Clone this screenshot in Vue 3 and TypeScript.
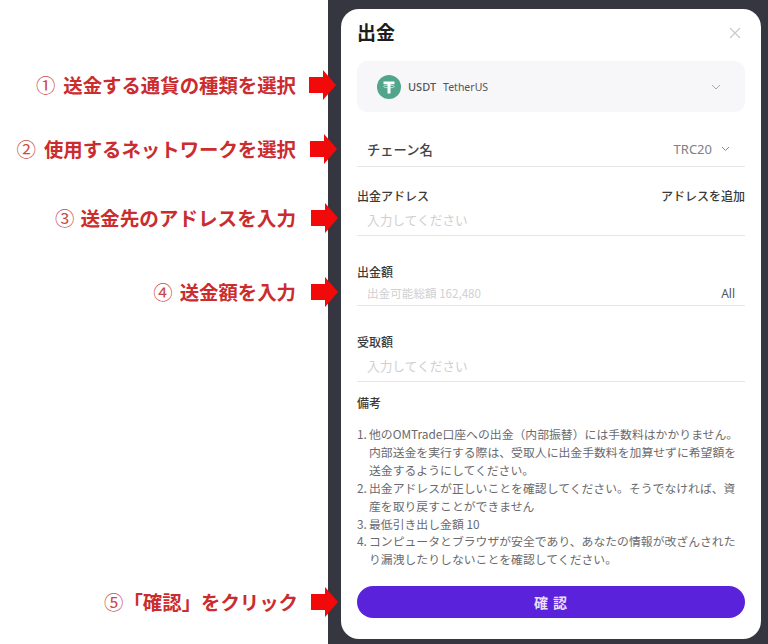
<script setup lang="ts">
const steps = [
  { id: 1, mark: '①', text: '送金する通貨の種類を選択', cls: 'a' },
  { id: 2, mark: '②', text: '使用するネットワークを選択', cls: 'b' },
  { id: 3, mark: '③', text: '送金先のアドレスを入力', cls: 'c' },
  { id: 4, mark: '④', text: '送金額を入力', cls: 'd' },
  { id: 5, mark: '⑤', text: '「確認」をクリック', cls: 'e' },
]
const notes = [
  { n: '1.', t: '他のOMTrade口座への出金（内部振替）には手数料はかかりません。内部送金を実行する際は、受取人に出金手数料を加算せずに希望額を送金するようにしてください。' },
  { n: '2.', t: '出金アドレスが正しいことを確認してください。そうでなければ、資産を取り戻すことができません' },
  { n: '3.', t: '最低引き出し金額 10' },
  { n: '4.', t: 'コンピュータとブラウザが安全であり、あなたの情報が改ざんされたり漏洩したりしないことを確認してください。' },
]
</script>

<template>
  <div class="page">
    <div class="steps">
      <div v-for="s in steps" :key="s.id" class="step" :class="s.cls">
        <span class="step-mark">{{ s.mark }}</span>
        <span class="step-text">{{ s.text }}</span>
        <svg class="arrow" width="27" height="30" viewBox="0 0 27 30">
          <polygon points="0,7 14,7 14,0 27,15 14,30 14,23 0,23" fill="#f20a0a" />
        </svg>
      </div>
    </div>

    <div class="backdrop">
      <div class="modal">
        <div class="head">
          <h1 class="title">出金</h1>
          <svg class="close" width="12" height="12" viewBox="0 0 12 12">
            <path d="M1 1 11 11M11 1 1 11" stroke="#c9c9cc" stroke-width="1.2" fill="none" />
          </svg>
        </div>

        <div class="coin">
          <svg class="coin-icon" width="24" height="24" viewBox="0 0 24 24">
            <circle cx="12" cy="12" r="12" fill="#50a58a" />
            <path d="M6.500 6.500h11v2.800h-4v9.200h-3V9.300h-4z" fill="#fff" />
            <ellipse cx="12" cy="11.500" rx="5.500" ry="1.300" fill="none" stroke="#fff" stroke-opacity="0.75" stroke-width="0.8" />
          </svg>
          <span class="coin-sym">USDT</span>
          <span class="coin-name">TetherUS</span>
          <svg class="chev coin-chev" width="10" height="6" viewBox="0 0 10 6">
            <path d="M1 1 5 5 9 1" stroke="#a8a8ae" stroke-width="1" fill="none" />
          </svg>
        </div>

        <div class="chain">
          <span class="chain-label">チェーン名</span>
          <span class="chain-value">TRC20</span>
          <svg class="chev chain-chev" width="9" height="6" viewBox="0 0 9 6">
            <path d="M1 1 4.500 4.500 8 1" stroke="#8a8a90" stroke-width="1" fill="none" />
          </svg>
        </div>

        <div class="label-row addr">
          <span>出金アドレス</span>
          <span>アドレスを追加</span>
        </div>
        <div class="input tall"><span class="ph">入力してください</span></div>

        <div class="label-row gap"><span>出金額</span></div>
        <div class="input short">
          <span class="ph small">出金可能総額 162,480</span>
          <span class="all">All</span>
        </div>

        <div class="label-row gap"><span>受取額</span></div>
        <div class="input tall"><span class="ph">入力してください</span></div>

        <div class="label-row memo"><span>備考</span></div>
        <ul class="notes">
          <li v-for="x in notes" :key="x.n">
            <span class="num">{{ x.n }}</span>
            <span class="note-text">{{ x.t }}</span>
          </li>
        </ul>

        <button class="confirm" type="button">確 認</button>
      </div>
    </div>
  </div>
</template>

<style scoped>
.page {
  display: flex;
  width: 768px;
  height: 644px;
  overflow: hidden;
  background: #fff;
  font-family: "Noto Sans", "Noto Sans CJK JP", sans-serif;
}
.steps {
  flex: none;
  width: 338px;
  margin-right: -10px;
  position: relative;
  z-index: 1;
  display: flex;
  flex-direction: column;
}
.step {
  display: flex;
  align-items: center;
  justify-content: flex-end;
  height: 30px;
}
.step-mark {
  font-family: "Noto Sans CJK JP", sans-serif;
  font-size: 19.400px;
  font-weight: 400;
  color: #c9494b;
  line-height: 30px;
  margin-right: 8px;
}
.step-text {
  font-family: "Noto Sans CJK JP", sans-serif;
  font-size: 19.400px;
  font-weight: 700;
  color: #cb2c2e;
  white-space: nowrap;
  line-height: 30px;
}
.arrow {
  flex: none;
  margin-left: 13px;
}
.a { margin-top: 70px; padding-right: 2px; }
.b { margin-top: 34px; padding-right: 1px; }
.b .arrow { margin-left: 14px; }
.c { margin-top: 39px; }
.c .step-text { font-size: 19.600px; }
.c .step-mark { margin-right: 6px; }
.c .arrow { margin-left: 15px; }
.d { margin-top: 44px; }
.d .step-mark { margin-right: 7px; }
.d .arrow { margin-left: 15px; }
.e { margin-top: 280px; }
.e .step-mark { margin-right: 0; }
.e .arrow { margin-left: 13px; }

.backdrop {
  flex: 1;
  background: #363640;
  padding: 9px 7px 0 13px;
}
.modal {
  box-sizing: border-box;
  height: 630px;
  background: #fff;
  border-radius: 18px;
  padding: 10px 16px 0;
  color: #333;
}
.head {
  display: flex;
  align-items: center;
  justify-content: space-between;
  height: 28px;
  margin-bottom: 14px;
}
.title {
  margin: 0 0 2px;
  font-family: "Noto Sans CJK JP", sans-serif;
  font-size: 19px;
  line-height: 24px;
  font-weight: 700;
  color: #1e1e1e;
}
.close { margin-right: 4px; }
.coin {
  display: flex;
  align-items: center;
  height: 51px;
  background: #f7f7f9;
  border-radius: 10px;
  padding: 0 24px 0 20px;
}
.coin-icon { flex: none; }
.coin-sym {
  margin-left: 7px;
  font-size: 11px;
  font-weight: 500;
  color: #555;
}
.coin-name {
  margin-left: 7px;
  font-size: 10.500px;
  color: #555;
}
.coin-chev { margin-left: auto; }
.chain {
  display: flex;
  align-items: center;
  height: 34px;
  margin-top: 20px;
  padding: 0 15px 0 10px;
  border-bottom: 1px solid #e6e6e8;
}
.chain-label {
  font-family: "Noto Sans CJK JP", sans-serif;
  font-size: 13.300px;
  font-weight: 500;
  color: #444;
}
.chain-value {
  margin-left: auto;
  font-size: 13px;
  color: #808085;
}
.chain-chev { margin-left: 9px; }
.label-row {
  display: flex;
  justify-content: space-between;
  height: 18px;
  line-height: 18px;
  font-family: "Noto Sans CJK JP", sans-serif;
  font-size: 12px;
  font-weight: 500;
  color: #3a3a3a;
}
.addr { margin-top: 20px; }
.gap { margin-top: 27px; }
.memo { margin-top: 12px; }
.input {
  display: flex;
  align-items: center;
  justify-content: space-between;
  padding: 0 10px;
  border-bottom: 1px solid #e6e6e8;
}
.tall { height: 28px; padding-bottom: 2px; }
.short { height: 24px; }
.ph {
  font-family: "Noto Sans CJK JP", sans-serif;
  font-size: 12.700px;
  color: #cfcfd2;
}
.ph.small { font-size: 11.600px; }
.all {
  font-size: 12px;
  color: #555;
}
.notes {
  list-style: none;
  margin: 13px 0 0;
  padding: 0;
  height: 143px;
  font-family: "Noto Sans CJK JP", sans-serif;
  font-size: 11.850px;
  line-height: 17.900px;
  color: #6a6a6e;
}
.notes li {
  display: flex;
}
.num {
  flex: none;
  width: 12px;
}
.note-text {
  flex: 1;
}
.confirm {
  display: block;
  width: 100%;
  height: 32px;
  margin-top: 18px;
  border: 0;
  border-radius: 16px;
  background: #5b22dc;
  color: #eadff5;
  font-family: "Noto Sans CJK JP", sans-serif;
  font-size: 14px;
  font-weight: 700;
  letter-spacing: 1px;
}
</style>
